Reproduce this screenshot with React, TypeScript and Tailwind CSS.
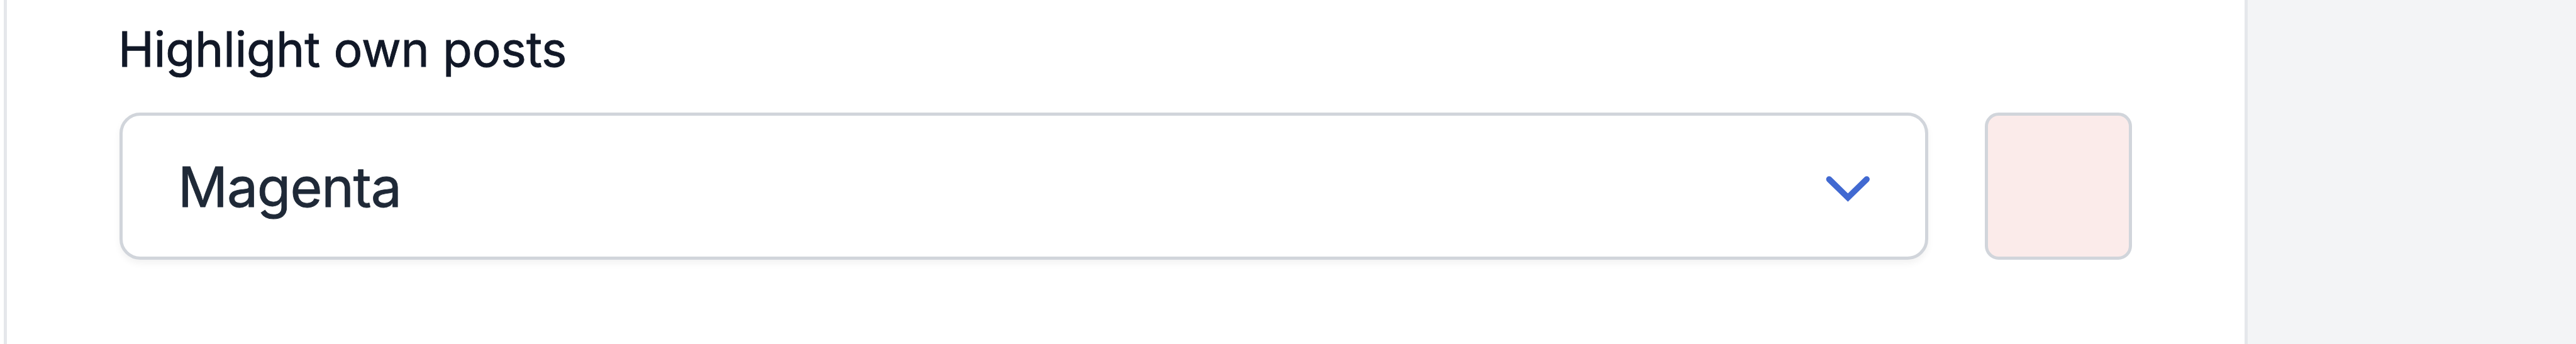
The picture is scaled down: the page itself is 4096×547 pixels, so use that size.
import React, { useState } from 'react';

interface ColorOption {
  name: string;
  swatch: string;
}

const COLORS: ColorOption[] = [
  { name: 'Magenta', swatch: 'bg-[#fbebea]' },
  { name: 'Blue', swatch: 'bg-blue-50' },
  { name: 'Green', swatch: 'bg-green-50' },
];

interface ColorSelectProps {
  label: string;
  selected: ColorOption;
  onNext: () => void;
}

const ColorSelect: React.FC<ColorSelectProps> = ({ label, selected, onNext }) => {
  return (
    <div>
      <div className="-ml-[2px] h-[109px] text-[76.6px] leading-[109px] tracking-[-0.12px] whitespace-nowrap text-[#111827] [-webkit-text-stroke:0.9px_#111827]">
        {label}
      </div>
      <div className="mt-[46px] flex items-center justify-between">
        <button
          type="button"
          onClick={onNext}
          className="flex h-[234px] w-[2876px] items-center justify-between rounded-[33px] border-[5px] border-[#d1d5db] bg-white pr-[86px] pl-[88px] text-[87.5px] tracking-[-1.15px] text-[#1f2937] shadow-[0_5.5px_11px_rgba(0,0,0,0.05)]"
        >
          <span className="mt-[2px] leading-[131px] [-webkit-text-stroke:0.9px_#1f2937]">{selected.name}</span>
          <svg className="mt-2 h-[44px] w-[73px]" fill="none" stroke="#4169d1" viewBox="0 0 73 44">
            <path strokeLinecap="round" strokeLinejoin="miter" strokeWidth="9.5" d="M6.4 7l29.9 29.2L66.2 7" />
          </svg>
        </button>
        <div className={`h-[234px] w-[234px] rounded-[22px] border-[5px] border-[#d1d5db] ${selected.swatch}`} />
      </div>
    </div>
  );
};

const App: React.FC = () => {
  const [index, setIndex] = useState(0);

  return (
    <div className="h-[547px] w-[4096px] overflow-hidden bg-[#f3f4f6] font-['Inter',sans-serif]">
      <div className="flex h-full w-[3574px] bg-white pl-[6px]">
        <div className="h-full grow border-x-[5px] border-[#e5e7eb] px-[179px] pt-6">
          <ColorSelect
            label="Highlight own posts"
            selected={COLORS[index]}
            onNext={() => setIndex((index + 1) % COLORS.length)}
          />
        </div>
      </div>
    </div>
  );
};

export default App;
